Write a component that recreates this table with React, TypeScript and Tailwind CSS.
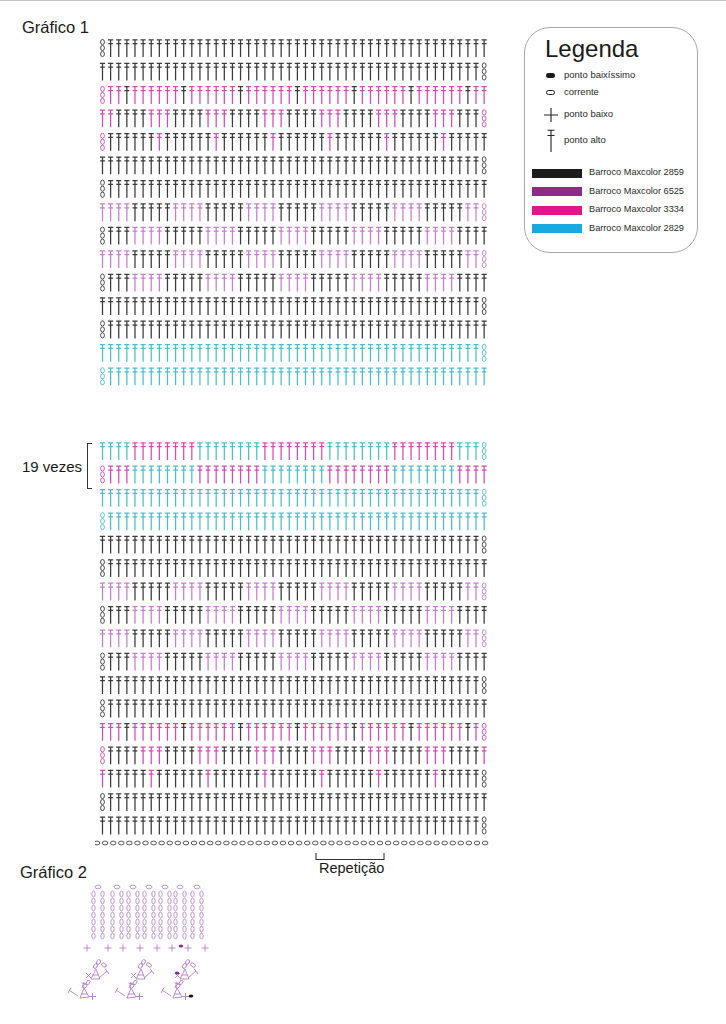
import React from "react";

const K = "#3a3a3a";
const M = "#d24bb3";
const P = "#c47fcc";
const C = "#4cbdca";

type Row = { side: "L" | "R"; chain: string; color: (c: number) => string };

const mod = (n: number, m: number) => ((n % m) + m) % m;
const all = (col: string) => () => col;

// top chart (Gráfico 1)
const chart1: Row[] = [
  { side: "L", chain: K, color: all(K) },
  { side: "R", chain: K, color: all(K) },
  { side: "L", chain: M, color: (c) => (c % 7 === 3 ? K : M) },
  { side: "R", chain: M, color: (c) => ([6, 0, 1].includes(c % 7) ? M : K) },
  { side: "L", chain: M, color: (c) => (c % 7 === 0 ? M : K) },
  { side: "R", chain: K, color: all(K) },
  { side: "L", chain: K, color: all(K) },
  { side: "R", chain: P, color: (c) => (c % 9 < 4 ? P : K) },
  { side: "L", chain: K, color: (c) => (c % 9 >= 4 && c % 9 <= 7 ? P : K) },
  { side: "R", chain: P, color: (c) => (c % 9 < 4 ? P : K) },
  { side: "L", chain: K, color: (c) => (c % 9 >= 4 && c % 9 <= 7 ? P : K) },
  { side: "R", chain: K, color: all(K) },
  { side: "L", chain: K, color: all(K) },
  { side: "R", chain: C, color: all(C) },
  { side: "L", chain: C, color: all(C) },
];

// repeated block
const chart2: Row[] = [
  { side: "R", chain: C, color: (c) => (mod(c - 4, 16) < 8 ? M : C) },
  { side: "L", chain: M, color: (c) => (mod(c + 4, 16) < 8 ? M : C) },
  { side: "R", chain: C, color: all(C) },
  { side: "L", chain: C, color: all(C) },
  { side: "R", chain: K, color: all(K) },
  { side: "L", chain: K, color: all(K) },
  { side: "R", chain: P, color: (c) => (c % 9 < 4 ? P : K) },
  { side: "L", chain: K, color: (c) => (c % 9 >= 4 && c % 9 <= 7 ? P : K) },
  { side: "R", chain: P, color: (c) => (c % 9 < 4 ? P : K) },
  { side: "L", chain: K, color: (c) => (c % 9 >= 4 && c % 9 <= 7 ? P : K) },
  { side: "R", chain: K, color: all(K) },
  { side: "L", chain: K, color: all(K) },
  { side: "R", chain: M, color: (c) => (c % 7 === 3 ? K : M) },
  { side: "L", chain: M, color: (c) => ([5, 6, 0].includes(c % 7) ? M : K) },
  { side: "R", chain: K, color: (c) => (c % 7 === 6 || c === 0 ? M : K) },
  { side: "L", chain: K, color: all(K) },
  { side: "R", chain: K, color: all(K) },
];

const cx = (c: number) => 7.5 + 8.12 * c;

function stitch(x: number, t: number) {
  return `M${x} ${t + 0.5}V${t + 18}M${x - 2.6} ${t + 0.8}H${x + 2.6}M${x - 2.4} ${t + 4.6}H${x + 2.4}`;
}

function ChartRows({ rows, top, pitch }: { rows: Row[]; top: number; pitch: number }) {
  return (
    <>
      {rows.map((row, r) => {
        const t = top + r * pitch;
        const paths: Record<string, string> = {};
        const first = row.side === "L" ? 1 : 0;
        for (let c = first; c < first + 47; c++) {
          const col = row.color(c);
          paths[col] = (paths[col] || "") + stitch(cx(c), t);
        }
        const chainX = cx(row.side === "L" ? 0 : 47);
        return (
          <g key={r}>
            {Object.entries(paths).map(([col, d]) => (
              <path key={col} d={d} stroke={col} strokeWidth={1.25} fill="none" />
            ))}
            {[3, 9, 15].map((dy) => (
              <ellipse key={dy} cx={chainX} cy={t + dy} rx={1.9} ry={2.6} stroke={row.chain} strokeWidth={0.9} fill="none" />
            ))}
          </g>
        );
      })}
    </>
  );
}

function StitchIcon() {
  return (
    <svg width="10" height="24" viewBox="0 0 10 24">
      <path d="M5 1V23M1.5 1.2H8.5M1.5 6.5H8.5" stroke="#222" strokeWidth="1.1" fill="none" />
    </svg>
  );
}

const swatches = [
  { color: "#1c1c1c", label: "Barroco Maxcolor 2859" },
  { color: "#8e2a8c", label: "Barroco Maxcolor 6525" },
  { color: "#e0168a", label: "Barroco Maxcolor 3334" },
  { color: "#18a9e1", label: "Barroco Maxcolor 2829" },
];

function Legend() {
  return (
    <div className="ml-[29px] mt-[26px] w-[174px] h-[226px] rounded-[26px] border border-[#a8a8a8] text-[#2a2a2a]">
      <div className="pl-[20px] pt-[7px] text-[24px] leading-[28px] text-[#1a1a1a]">Legenda</div>

      <div className="pl-[18px] text-[9.5px]">
        <div className="flex items-center h-[12px] mt-[6px]">
          <div className="w-[15px] mr-[6px] flex justify-center">
            <span className="block w-[9px] h-[5px] rounded-full bg-[#1a1a1a]" />
          </div>
          <span>ponto baixíssimo</span>
        </div>
        <div className="flex items-center h-[12px] mt-[5.5px]">
          <div className="w-[15px] mr-[6px] flex justify-center">
            <span className="block w-[9px] h-[5px] rounded-full border border-[#1a1a1a]" />
          </div>
          <span>corrente</span>
        </div>
        <div className="flex items-center h-[16px] mt-[8px]">
          <div className="w-[15px] mr-[6px] flex justify-center">
            <svg width="14" height="14" viewBox="0 0 14 14">
              <path d="M7 0V14M0 7H14" stroke="#222" strokeWidth="1.1" />
            </svg>
          </div>
          <span>ponto baixo</span>
        </div>
        <div className="flex items-center h-[24px] mt-[6px]">
          <div className="w-[15px] mr-[6px] flex justify-center">
            <StitchIcon />
          </div>
          <span>ponto alto</span>
        </div>
      </div>

      <div className="pl-[7px] mt-[16px] flex flex-col gap-[9.5px] text-[9.2px]">
        {swatches.map((s) => (
          <div key={s.label} className="flex items-center h-[9px] gap-[7px]">
            <span className="block w-[50px] h-[9px]" style={{ backgroundColor: s.color }} />
            <span className="leading-none">{s.label}</span>
          </div>
        ))}
      </div>
    </div>
  );
}

const LAV = "#b57dc8";

function UpperMotif({ dx }: { dx: number }) {
  return (
    <g transform={`translate(${dx},0)`} stroke={LAV} strokeWidth={0.9} fill="none">
      <path d="M86 973L91 978M91 973L86 978" />
      <path d="M91 979L96 969L100 979ZM92.5 975H98.5" />
      <ellipse cx={95.5} cy={966} rx={1.7} ry={2.5} transform="rotate(30 95.5 966)" />
      <ellipse cx={98.5} cy={962} rx={1.7} ry={2.5} transform="rotate(30 98.5 962)" />
      <path d="M99 978L107 971M105 968.5L109 974" />
      <ellipse cx={104} cy={965} rx={2.6} ry={1.8} transform="rotate(35 104 965)" />
    </g>
  );
}

function LowerMotif({ dx }: { dx: number }) {
  return (
    <g transform={`translate(${dx},0)`} stroke={LAV} strokeWidth={0.9} fill="none">
      <path d="M69 990L78 996M68 993L71 987.5" />
      <path d="M80 998L84 988L89 997ZM81.5 994H87.5" />
      <path d="M82 988L84 982M81.5 983L86 984" />
      <ellipse cx={85} cy={986} rx={1.6} ry={2.4} transform="rotate(35 85 986)" />
      <ellipse cx={88} cy={982.5} rx={1.6} ry={2.4} transform="rotate(35 88 982.5)" />
      <path d="M89 996.5H96M92.5 993V1000" />
    </g>
  );
}

function SmallChart() {
  const tops = [98, 117, 133, 149, 165, 180, 197];
  const pluses = [87, 108, 123, 140, 157, 172, 188, 205];
  return (
    <svg width="240" height="140" viewBox="0 880 240 140" className="block">
      {tops.map((x) => (
        <g key={x} stroke={LAV} strokeWidth={0.8} fill="none">
          <ellipse cx={x} cy={887} rx={3} ry={1.8} />
          {[x - 4.5, x + 4.5].map((lx) =>
            [0, 1, 2, 3, 4, 5, 6].map((k) => (
              <ellipse key={`${lx}-${k}`} cx={lx} cy={894 + k * 7} rx={1.7} ry={2.9} />
            ))
          )}
        </g>
      ))}
      {pluses.map((x) => (
        <path key={x} d={`M${x - 3.5} 948H${x + 3.5}M${x} 944.5V951.5`} stroke={LAV} strokeWidth={0.9} />
      ))}
      <ellipse cx={181} cy={946} rx={2.3} ry={1.5} fill="#8a2a8a" />
      {[0, 45, 89].map((d) => (
        <UpperMotif key={d} dx={d} />
      ))}
      {[0, 47, 93].map((d) => (
        <LowerMotif key={d} dx={d} />
      ))}
      <ellipse cx={177} cy={973} rx={2.3} ry={1.5} fill="#8a2a8a" />
      <ellipse cx={191} cy={996} rx={2.3} ry={1.5} fill="#111" />
    </svg>
  );
}

export default function App() {
  return (
    <div className="w-[726px] h-[1024px] overflow-hidden bg-white border-t border-[#c4c4c4] text-[#1a1a1a] font-['Liberation_Sans',Arial,sans-serif]">
      {/* Gráfico 1 + legenda */}
      <div className="flex items-start h-[435px]">
        <div className="w-[95px] shrink-0 pl-[22px] mt-[16px] text-[16.5px] leading-[20px]">Gráfico 1</div>
        <svg width="400" height="370" className="block shrink-0 mt-[34px]">
          <ChartRows rows={chart1} top={4} pitch={23.45} />
        </svg>
        <Legend />
      </div>

      {/* repeated block */}
      <div className="flex items-start h-[424px]">
        <div className="w-[95px] shrink-0 pl-[22px] mt-[7px] flex items-center gap-[5px] h-[46px]">
          <span className="text-[15px] leading-none whitespace-nowrap">19 vezes</span>
          <span className="block w-[5px] h-[46px] border border-r-0 border-[#333]" />
        </div>
        <svg width="400" height="424" className="block shrink-0">
          <ChartRows rows={chart2} top={6} pitch={23.4} />
          {Array.from({ length: 49 }, (_, i) => (
            <ellipse key={i} cx={2 + i * 8.085} cy={407} rx={2.8} ry={1.9} stroke="#444" strokeWidth={0.9} fill="none" />
          ))}
          <path d="M221 417V423.5H289V417" stroke="#333" strokeWidth={1.1} fill="none" />
        </svg>
      </div>

      {/* Gráfico 2 */}
      <div className="flex items-start h-[20px]">
        <div className="w-[95px] shrink-0 pl-[20px] mt-[2px] text-[16.5px] leading-[20px] whitespace-nowrap">Gráfico 2</div>
        <div className="ml-[224px] text-[14.5px] leading-[17px]">Repetição</div>
      </div>

      <SmallChart />
    </div>
  );
}
